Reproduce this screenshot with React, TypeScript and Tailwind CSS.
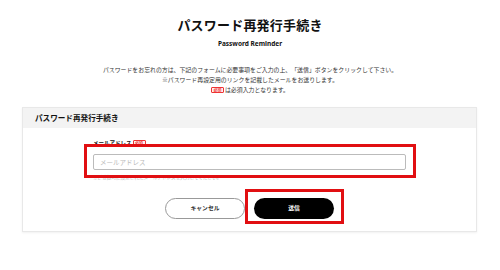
// Password reminder page
const jp = { fontFamily: '"Noto Sans CJK JP", "Noto Sans", sans-serif' };

function Required() {
  return (
    <span className="inline-flex items-center justify-center border border-[#e33] text-[#e33] bg-[#fff0f0] text-[4px] leading-none px-[1.5px] h-[6px] rounded-[1px] font-bold">
      必須
    </span>
  );
}

export default function App() {
  return (
    <div className="relative w-[500px] h-[270px] bg-white text-[#111] overflow-hidden" style={jp}>
      <h1 className="mt-[17px] text-center text-[13px] leading-[16px] font-bold tracking-[0.2px]">
        パスワード再発行手続き
      </h1>
      <p className="mt-[7px] text-center text-[6.5px] leading-[8px] font-bold" style={{ fontFamily: '"Noto Sans", sans-serif' }}>
        Password Reminder
      </p>

      <div className="mt-[17px] flex flex-col items-center text-[5.9px] leading-[10px] text-[#333]">
        <p>パスワードをお忘れの方は、下記のフォームに必要事項をご入力の上、「送信」ボタンをクリックして下さい。</p>
        <p>※パスワード再設定用のリンクを記載したメールをお送りします。</p>
        <p className="flex items-center gap-[1px]">
          <Required />は必須入力となります。
        </p>
      </div>

      <div className="mt-[12px] ml-[22px] w-[455px] border border-[#e8e8e8] shadow-[0_1px_2px_rgba(0,0,0,0.06)]">
        <div className="h-[20px] bg-[#f3f3f3] flex items-center pl-[12px] text-[7.6px] font-bold">
          パスワード再発行手続き
        </div>
        <div className="pt-[11px] pb-[12px]">
          <div className="pl-[70px]">
            <div className="flex items-center gap-[1px] h-[8px] text-[5.5px] font-bold">
              メールアドレス<Required />
            </div>
            <input
              type="text"
              placeholder="メールアドレス"
              className="mt-[7px] block w-[313px] h-[16px] border border-[#bbb] rounded-[2px] px-[6px] text-[6.5px] placeholder:text-[#bbb] outline-none"
            />
            <p className="mt-[4px] text-[4.6px] leading-[6px] text-[#bbb]">
              ※ご登録時に設定されたメールアドレスを入力してください。
            </p>
          </div>
          <div className="mt-[18px] flex justify-center gap-[9px]">
            <button className="w-[80px] h-[21px] rounded-full border border-[#999] bg-white text-[5.8px] font-bold text-[#333]">
              キャンセル
            </button>
            <button className="w-[80px] h-[21px] rounded-full bg-black text-white text-[5.8px] font-bold">
              送信
            </button>
          </div>
        </div>
      </div>

      {/* annotation boxes */}
      <div className="absolute left-[84px] top-[144px] w-[332px] h-[34px] border-[3px] border-[#e10f12]" />
      <div className="absolute left-[245px] top-[189px] w-[99px] h-[35px] border-[3px] border-[#e10f12]" />
    </div>
  );
}
